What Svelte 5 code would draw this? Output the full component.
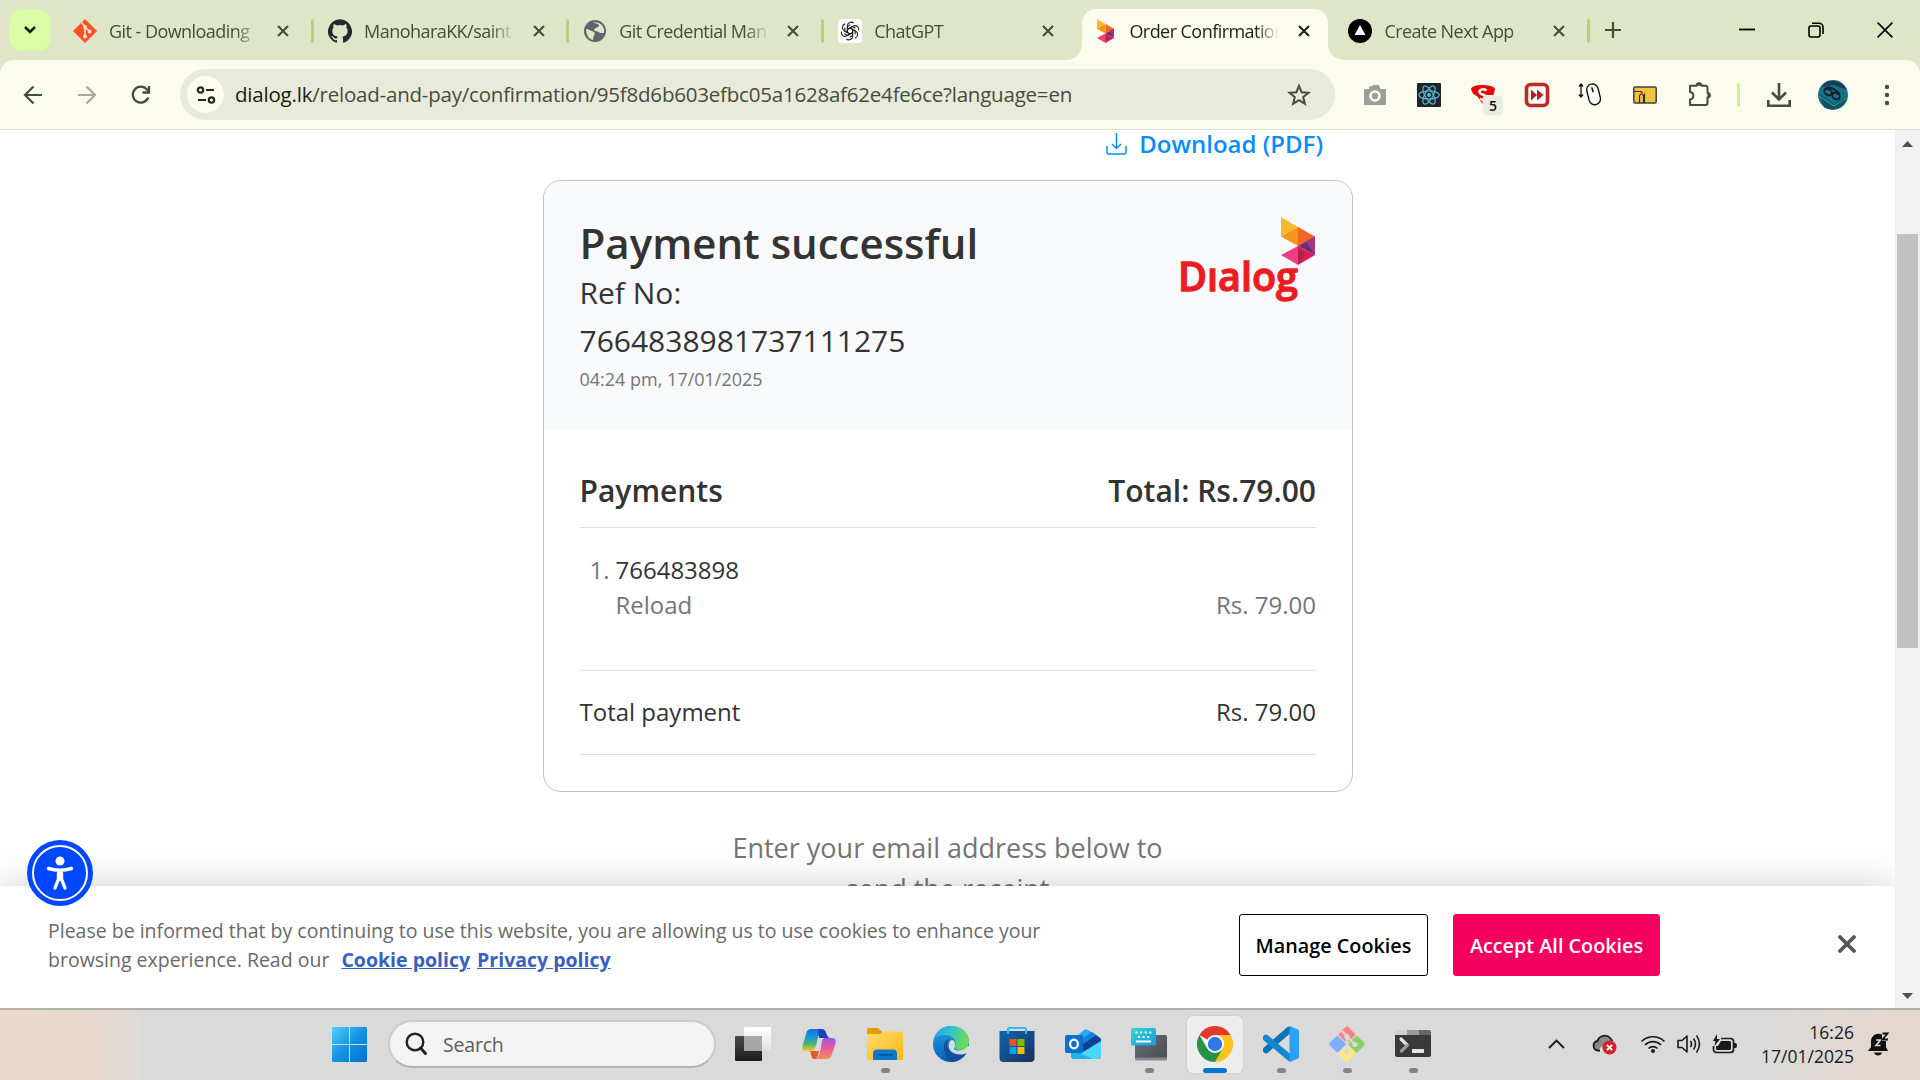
<script>
  const tabs = [
    { icon: 'git', title: 'Git - Downloading' },
    { icon: 'github', title: 'ManoharaKK/saint-' },
    { icon: 'globe', title: 'Git Credential Man' },
    { icon: 'gpt', title: 'ChatGPT' },
    { icon: 'dialog', title: 'Order Confirmation', active: true },
    { icon: 'next', title: 'Create Next App' }
  ];
  const extensions = ['camera', 'react', 'shield', 'forward', 'mouse', 'folder', 'puzzle'];
  const apps = [
    { icon: 'taskview' },
    { icon: 'copilot' },
    { icon: 'explorer', running: true },
    { icon: 'edge' },
    { icon: 'store' },
    { icon: 'outlook' },
    { icon: 'keyboard', running: true },
    { icon: 'chrome', running: true, active: true },
    { icon: 'vscode', running: true },
    { icon: 'gitbash', running: true },
    { icon: 'terminal', running: true }
  ];
  const petals = [0, 60, 120, 180, 240, 300];
</script>

{#snippet dialogMark()}
  <path d="M0 0L0 19.500L17 10Z" fill="#fdb92e" />
  <path d="M17 10L0 19.500L17 29Z" fill="#f7941e" />
  <path d="M17 10L34 19.500L17 29Z" fill="#f26522" />
  <path d="M34 19.500L17 29L34 38Z" fill="#6b2c7c" />
  <path d="M25 24.500L34 19.500V38Z" fill="#a5347f" />
  <path d="M17 29L34 38L17 48Z" fill="#db1f56" />
  <path d="M17 29L0 38L17 48Z" fill="#ee3d82" />
  <path d="M17 29L24 38L17 48Z" fill="#b52045" />
{/snippet}

{#snippet favicon(name)}
  <svg class="favicon" viewBox="0 0 24 24">
    {#if name === 'git'}
      <path d="M12 0.500L23.500 12L12 23.500L0.500 12Z" fill="#fb4f28" stroke="#fb4f28" stroke-linejoin="round" />
      <path d="M8.500 3.500L12 7.500V18M12 8L16.500 12.500" stroke="#e6e8d0" stroke-width="1.600" fill="none" />
      <circle cx="12" cy="8" r="1.900" fill="#e6e8d0" /><circle cx="12" cy="17.500" r="1.900" fill="#e6e8d0" /><circle cx="16.500" cy="12.500" r="1.900" fill="#e6e8d0" />
    {:else if name === 'github'}
      <path fill="#24292f" d="M12 .3a12 12 0 0 0-3.800 23.400c.6.1.8-.3.8-.6v-2c-3.300.7-4-1.600-4-1.600-.6-1.400-1.400-1.800-1.400-1.800-1-.7.1-.7.1-.7 1.200 0 1.900 1.200 1.900 1.200 1 1.800 2.800 1.300 3.500 1 0-.8.4-1.300.7-1.600-2.700-.3-5.500-1.300-5.500-6 0-1.200.5-2.300 1.300-3.100-.2-.4-.6-1.600 0-3.200 0 0 1-.3 3.400 1.200a11.500 11.500 0 0 1 6 0c2.300-1.500 3.300-1.200 3.300-1.200.6 1.600.2 2.800 0 3.200.9.8 1.300 1.900 1.300 3.200 0 4.600-2.800 5.600-5.500 5.900.5.4.9 1 .9 2.200v3.300c0 .3.1.7.8.6A12 12 0 0 0 12 .3" />
    {:else if name === 'globe'}
      <circle cx="12" cy="12" r="11" fill="#61646a" />
      <path d="M10 3c1 2 5 1 6 3c0 3-4 2-5 5c2 2 4 1 6 3l4 0a9.500 9.500 0 0 0-5-10zM3 10c3 0 5 2 8 3c2 2-1 4-1 8c-4-1-7-5-7-11z" fill="#dee6c7" />
    {:else if name === 'gpt'}
      <rect width="24" height="24" rx="4" fill="#fff" />
      <g fill="none" stroke="#222" stroke-width="1.100">
        {#each petals as a}
          <path transform="rotate({a} 12 12)" d="M9.400 13.500V6.800a3.700 3.700 0 0 1 6.300-2.600M9.400 10.500L14.500 7.500l3 1.700" />
        {/each}
      </g>
    {:else if name === 'dialog'}
      <g transform="translate(4 0) scale(.5)">{@render dialogMark()}</g>
    {:else}
      <circle cx="12" cy="12" r="12" fill="#000" /><path d="M12 6L17.500 16H6.500Z" fill="#fff" />
    {/if}
  </svg>
{/snippet}

{#snippet extension(name)}
  <svg class="ext" viewBox="0 0 24 24">
    {#if name === 'camera'}
      <path d="M2 6H6V3.500H9L10 2H16L17.500 6H22a1 1 0 0 1 1 1V21a1 1 0 0 1-1 1H2a1 1 0 0 1-1-1V7a1 1 0 0 1 1-1Z" fill="#9c9c9a" />
      <circle cx="12" cy="13" r="4.500" fill="#9c9c9a" stroke="#fff" stroke-width="2.600" />
    {:else if name === 'react'}
      <rect width="24" height="24" rx="1" fill="#202328" />
      <g fill="none" stroke="#55b9d9" stroke-width="1.200">
        <ellipse cx="12" cy="12" rx="10.200" ry="4" /><ellipse cx="12" cy="12" rx="10.200" ry="4" transform="rotate(60 12 12)" /><ellipse cx="12" cy="12" rx="10.200" ry="4" transform="rotate(120 12 12)" />
      </g>
      <circle cx="12" cy="12" r="2" fill="#55b9d9" />
    {:else if name === 'shield'}
      <path d="M0 6C1 3 5 2 11 2S23 3 24 6C23 12 20 20 13 22C10 20 8 15 6 13C3 12 1 10 0 6Z" fill="#ec0505" />
      <path d="M15.500 7.500C13 5.500 8.500 6 8.500 9C8.500 12 15 11 15 14.500C15 17 11 17.500 9 15.500" stroke="#fff" stroke-width="2.400" fill="none" />
      <rect x="12" y="12.500" width="20" height="20" rx="4" fill="#e9ecdf" stroke="#f5f6ea" />
    {:else if name === 'forward'}
      <rect x="1.500" y="1.500" width="21" height="21" rx="4" fill="#fff" stroke="#c22724" stroke-width="3.600" />
      <path d="M6 6.500L12 12L6 17.500ZM12 6.500L18.500 12L12 17.500Z" fill="#b02220" />
    {:else if name === 'mouse'}
      <path d="M2 1V14M0 3.500L2 1L4 3.500M0 11.500L2 14L4 11.500" stroke="#111" stroke-width="1.300" fill="none" />
      <rect x="9" y="1" width="11.500" height="21" rx="5.700" transform="rotate(-14 14 12)" fill="#fff" stroke="#111" stroke-width="1.400" />
      <path d="M13 5L14 8.500" stroke="#111" stroke-width="1.600" stroke-linecap="round" />
    {:else if name === 'folder'}
      <rect x=".8" y="4" width="22.400" height="16" rx="1.300" fill="#f6c43c" stroke="#3f4145" stroke-width="1.500" />
      <path d="M1 8.500H8L9.500 10M6.500 20V13Q8.500 8.500 10.500 13V20M10.500 13L11.500 11.500V20" stroke="#2d2d2d" stroke-width="1.200" fill="none" />
    {:else}
      <path d="M3 2.700H9.500a2.500 2.500 0 0 1 5 0H18.500a2 2 0 0 1 2 2V10a2.200 2.200 0 0 1 0 4.500V20a2 2 0 0 1-2 2H3V16.500C7.500 16 7.500 9.500 3 9Z" fill="none" stroke="#434f37" stroke-width="2" stroke-linejoin="round" />
      <path d="M9 2.700a3 3 0 0 1 6 0ZM20.500 9.500a3 3 0 0 1 0 6Z" fill="#434f37" />
    {/if}
  </svg>
{/snippet}

{#snippet appIcon(name)}
  <svg class="app-icon" viewBox="0 0 36 36">
    {#if name === 'taskview'}
      <rect y="10" width="27" height="25" rx="1" fill="url(#tvDark)" />
      <rect x="9" y="1" width="27" height="24" rx="1" fill="url(#tvLight)" />
      <path d="M9 10H27V25H9Z" fill="#909090" opacity=".75" />
    {:else if name === 'copilot'}
      <path d="M10 3H21.500C18 5 17 11 16 16C14 24 13 25 8 25H5C1 25 1 22 2 18L5 8C6 4.500 7 3 10 3Z" fill="url(#coA)" />
      <path d="M17 3H21C24.500 3 25 7 26 9C27 11.500 28 12 30 12H19C17 12 17.500 5 17 3Z" fill="#1b3fc0" />
      <path d="M23 12H31C35 12 35.500 15 34 19L31 28C30 32 28 33 25 33H14C18 32 19 26 20 21C21 15 21 13 23 12Z" fill="url(#coB)" />
      <path d="M9 25H18C16 33 15 33 13 33C10 33 10 26 9 25Z" fill="#f0562e" />
    {:else if name === 'explorer'}
      <path d="M0 3.500A1.500 1.500 0 0 1 1.500 2H11L15 5.500V10H0Z" fill="#e19e0b" />
      <path d="M0 8H13L16 5.500H34.500A1.500 1.500 0 0 1 36 7V34H0Z" fill="url(#folderG)" />
      <path d="M6 34V27.500A4 4 0 0 1 10 23.500H26A4 4 0 0 1 30 27.500V34Z" fill="#0f78ca" />
      <path d="M11 28.800H25" stroke="#07539b" stroke-width="1.800" stroke-linecap="round" />
    {:else if name === 'edge'}
      <circle cx="18" cy="18" r="18" fill="url(#edgeB)" />
      <path d="M1 13C3 5 10 0 18 0C29 0 36 7 36 15C36 20 33 24 27 24C23 24 21 22.500 21 21.500C21 20.500 22.500 19.500 22.500 17C22.500 12.500 18 9 12 9C7 9 3 11 1 13Z" fill="url(#edgeG)" />
      <path d="M11 20C11 16 13 13.500 17 13C13 16 13.500 22 17 25.500C21 29.500 28 29 33.500 26.500C31 32 25 36 18.500 36C13 34 11 27 11 20Z" fill="#124f9c" />
      <path d="M22 18C22 22 20 22 21.500 23.500C24 25.500 31 25 35 20L40 22L33 27.500C27 30 20 28 17 24C14.500 20 16 15 18.500 14C21 14 22 16 22 18Z" fill="#dadada" />
    {:else if name === 'store'}
      <path d="M.500 5H35.500V32A4 4 0 0 1 31.500 36H4.500A4 4 0 0 1 .5 32Z" fill="url(#storeG)" />
      <path d="M9 8V3.500A1.500 1.500 0 0 1 10.500 2H25.500A1.500 1.500 0 0 1 27 3.500V8" fill="none" stroke="#2cbdee" stroke-width="2" />
      <path d="M10.500 13H17.500V20H10.500Z" fill="#f25022" /><path d="M18.500 13H25.500V20H18.500Z" fill="#7fba00" />
      <path d="M10.500 21H17.500V28H10.500Z" fill="#00a4ef" /><path d="M18.500 21H25.500V28H18.500Z" fill="#ffb900" />
    {:else if name === 'outlook'}
      <path d="M6 15L19 4Q21 2.500 23 4L34 11Q36 12.500 36 15V30Q36 33 33 33H10Q6 33 6 30Z" fill="#27a9ec" />
      <path d="M17 17L31 9L36 13V16L18 27Z" fill="#0f3f94" />
      <path d="M15 14L27 6L31 9L17 19Z" fill="#1580dc" />
      <path d="M18 26L36 15V30Q36 33 33 33H14Z" fill="#49d6fb" />
      <path d="M6 24L28 33H10Q6 33 6 30Z" fill="#1fb3ec" />
      <rect y="9" width="18" height="18" rx="2" fill="#106fc9" />
      <ellipse cx="9" cy="18" rx="3.900" ry="4.300" fill="none" stroke="#fff" stroke-width="2.200" />
    {:else if name === 'keyboard'}
      <rect x="4" y="9" width="32" height="25" rx="1.500" fill="url(#kbG)" /><path d="M4 31.500H36V33a1.500 1.500 0 0 1-1.500 1.500H5.500A1.500 1.500 0 0 1 4 33Z" fill="#868b93" />
      <rect y="2" width="25" height="17.500" rx="1.500" fill="url(#kbB)" />
      <path d="M4.500 6.500H21M7 11H19" stroke="#fff" stroke-width="2" stroke-dasharray="2 2.600" /><path d="M5 15.500H20" stroke="#fff" stroke-width="2" />
    {:else if name === 'chrome'}
      <path d="M18 18L2.400 9A18 18 0 0 1 33.600 9Z" fill="#e23b2e" />
      <path d="M18 18L33.600 9A18 18 0 0 1 18 36L10.200 22.500Z" fill="#fcc31e" />
      <path d="M2.400 9A18 18 0 0 0 18 36L25.800 22.500L18 26L10.200 22.500Z" fill="#269444" />
      <path d="M18 9H33.600L26 22.500Z" fill="#fcc31e" />
      <circle cx="18" cy="18" r="9" fill="#fff" /><circle cx="18" cy="18" r="7.200" fill="#2f77ea" />
    {:else if name === 'vscode'}
      <path d="M3 24L26 4" stroke="#0b74b9" stroke-width="6.500" stroke-linecap="round" />
      <path d="M3 12L27 32" stroke="#1487d2" stroke-width="6.500" stroke-linecap="round" />
      <path d="M26.500 0L35 3.500Q36 4 36 5V31Q36 32 35 32.500L26.500 36Z" fill="#27a3f2" />
    {:else if name === 'gitbash'}
      <g transform="rotate(45 18 18)">
        <rect x="5" y="5" width="12.500" height="12.500" rx="1.500" fill="#ff8080" />
        <rect x="18.700" y="5" width="12.500" height="12.500" rx="1.500" fill="#88d15c" />
        <rect x="5" y="18.700" width="12.500" height="12.500" rx="1.500" fill="#7fb0ff" />
        <rect x="18.700" y="18.700" width="12.500" height="12.500" rx="1.500" fill="#ffe680" />
      </g>
      <path d="M13 5L18 10.500V26M18 11L26 18.500" stroke="#dadada" stroke-width="2.200" fill="none" />
      <circle cx="18" cy="10.500" r="2.600" fill="#dadada" /><circle cx="18" cy="26" r="2.600" fill="#dadada" /><circle cx="26" cy="18.500" r="2.600" fill="#dadada" />
    {:else}
      <path d="M0 6A2 2 0 0 1 2 4H12V10H0Z" fill="#cfcfcf" /><path d="M12 4H24V10H12Z" fill="#9a9a9a" /><path d="M24 4H34A2 2 0 0 1 36 6V10H24Z" fill="#666" />
      <path d="M0 9H36V29A2 2 0 0 1 34 31H2A2 2 0 0 1 0 29Z" fill="#3a3a3a" />
      <path d="M6 13L12 19" stroke="#e4e4e4" stroke-width="3.200" stroke-linecap="round" /><path d="M12 19.500L6.500 25" stroke="#9c9c9c" stroke-width="3.200" stroke-linecap="round" />
      <rect x="17" y="23" width="12" height="4" rx=".5" fill="#e4e4e4" />
    {/if}
  </svg>
{/snippet}

<svg class="defs" width="0" height="0">
  <defs>
    <linearGradient id="tvDark" x2="0" y2="1"><stop stop-color="#4a4a4a" /><stop offset="1" stop-color="#1c1c1c" /></linearGradient>
    <linearGradient id="tvLight" x2="0" y2="1"><stop stop-color="#fff" /><stop offset="1" stop-color="#e2e2e2" /></linearGradient>
    <linearGradient id="coA" x2="0" y2="1"><stop stop-color="#1a70dd" /><stop offset=".35" stop-color="#1694d8" /><stop offset=".7" stop-color="#52b870" /><stop offset="1" stop-color="#f5cd1c" /></linearGradient>
    <linearGradient id="coB" x2="0" y2="1"><stop stop-color="#9a55e6" /><stop offset=".5" stop-color="#e85b9d" /><stop offset="1" stop-color="#ff8b50" /></linearGradient>
    <linearGradient id="folderG" x2="1" y2="1"><stop stop-color="#ffdb6b" /><stop offset="1" stop-color="#fbb815" /></linearGradient>
    <linearGradient id="edgeB" x2="0" y2="1"><stop stop-color="#1fa3e0" /><stop offset="1" stop-color="#0b5cb8" /></linearGradient>
    <linearGradient id="edgeG" x2="1" y2=".3"><stop stop-color="#239fdc" /><stop offset=".5" stop-color="#35c1d0" /><stop offset="1" stop-color="#66dd55" /></linearGradient>
    <linearGradient id="storeG" x2="1" y2="1"><stop stop-color="#0b66b5" /><stop offset="1" stop-color="#1f2f58" /></linearGradient>
    <linearGradient id="kbG" x2="1" y2="1"><stop stop-color="#6b7077" /><stop offset="1" stop-color="#474b51" /></linearGradient>
    <linearGradient id="kbB" x2="1" y2="1"><stop stop-color="#2fd9cd" /><stop offset="1" stop-color="#1b95dd" /></linearGradient>
    <linearGradient id="winG" x2="1" y2="1"><stop stop-color="#4fd0fb" /><stop offset=".5" stop-color="#1592e2" /><stop offset="1" stop-color="#0272ce" /></linearGradient>
  </defs>
</svg>

<div class="screen">
  <div class="chrome">
    <header class="tabstrip">
      <button class="tab-search" aria-label="Search tabs"><svg width="14" height="10" viewBox="0 0 14 10"><path d="M2 2L7 7L12 2" fill="none" stroke="#1a2010" stroke-width="2.600" /></svg></button>
      <div class="tabs">
        {#each tabs as tab, i}
          <div class="tab" class:active={tab.active}>
            {@render favicon(tab.icon)}
            <span class="tab-title">{tab.title}</span>
            <svg class="tab-close" viewBox="0 0 12 12"><path d="M1 1L11 11M11 1L1 11" stroke="currentColor" stroke-width="2.100" /></svg>
            <i class="sep" class:hidden={i === 3 || i === 4}></i>
          </div>
        {/each}
      </div>
      <svg class="plus" viewBox="0 0 16 16"><path d="M8 0V16M0 8H16" stroke="#434f37" stroke-width="2.200" /></svg>
      <div class="window-controls">
        <svg width="16" height="16" viewBox="0 0 16 16"><path d="M0 7.500H16" stroke="#000" stroke-width="1.800" /></svg>
        <svg width="16" height="16" viewBox="0 0 16 16" fill="none" stroke="#000" stroke-width="1.600"><rect x="1" y="4" width="11" height="11" rx="2" /><path d="M4 1.200H11A4 4 0 0 1 15 5V12" /></svg>
        <svg width="16" height="16" viewBox="0 0 16 16"><path d="M.6.6L15.400 15.400M15.400.6L.6 15.400" stroke="#000" stroke-width="1.600" /></svg>
      </div>
    </header>

    <nav class="toolbar">
      <div class="nav-icons">
        <svg width="20" height="20" viewBox="0 0 20 20"><path d="M10.500 1.500L2 10L10.500 18.500M2 10H19" fill="none" stroke="#434f37" stroke-width="2.200" /></svg>
        <svg width="20" height="20" viewBox="0 0 20 20"><path d="M9.500 1.500L18 10L9.500 18.500M18 10H1" fill="none" stroke="#a7aa9b" stroke-width="2.200" /></svg>
        <svg width="20" height="20" viewBox="0 0 20 20"><path d="M17.300 12.500A8 8 0 1 1 16 4.500L18 6.500M18 1V7.500H11.500" fill="none" stroke="#434f37" stroke-width="2.300" /></svg>
      </div>
      <div class="omnibox">
        <span class="site-info"><svg width="20" height="20" viewBox="0 0 20 20" fill="none" stroke="#23291b" stroke-width="2.200"><circle cx="4.500" cy="5" r="2.700" /><path d="M10 5H18M2 15H10" /><circle cx="15.500" cy="15" r="2.700" /></svg></span>
        <span class="url"><b>dialog.lk</b>/reload-and-pay/confirmation/95f8d6b603efbc05a1628af62e4fe6ce?language=en</span>
        <svg class="star" width="24" height="24" viewBox="0 0 24 24"><path d="M12 2.800L14.600 9.200L21.500 9.700L16.200 14.100L17.900 20.900L12 17.200L6.100 20.900L7.800 14.100L2.500 9.700L9.400 9.200Z" fill="none" stroke="#434f37" stroke-width="2" /></svg>
      </div>
      <div class="extensions">
        {#each extensions as name}
          <span class="ext-slot">{@render extension(name)}{#if name === 'shield'}<em>5</em>{/if}</span>
        {/each}
      </div>
      <i class="bar-sep"></i>
      <svg class="download" width="24" height="24" viewBox="0 0 24 24"><path d="M12 0V16M5 9.500L12 16.500L19 9.500M1.300 17V22.700H22.700V17" fill="none" stroke="#434f37" stroke-width="2.600" /></svg>
      <svg class="avatar" width="30" height="30" viewBox="0 0 30 30">
        <circle cx="15" cy="15" r="15" fill="#14748a" /><path d="M3 7A15 15 0 0 1 29 10L16 5Z" fill="#1e3c50" /><path d="M1 14L16 24L29 16A15 15 0 0 1 6 27Z" fill="#0d5260" /><path d="M1 16L16 26L30 17" stroke="#35a9b4" fill="none" />
        <g fill="none" stroke="#1c1a2e" stroke-width="1.800"><ellipse cx="10" cy="12" rx="4" ry="3" transform="rotate(30 10 12)" /><ellipse cx="18" cy="16" rx="4" ry="3" transform="rotate(30 18 16)" /><path d="M7 9C11 5 16 9 22 14" /></g>
      </svg>
      <svg class="dots" width="6" height="22" viewBox="0 0 6 22" fill="#434f37"><circle cx="3" cy="3" r="2.200" /><circle cx="3" cy="11" r="2.200" /><circle cx="3" cy="19" r="2.200" /></svg>
    </nav>
  </div>

  <div class="viewport">
    <main class="page">
      <a class="pdf" href="#pdf">
        <svg width="21" height="22" viewBox="0 0 21 22"><path d="M10.500 0V15M6 11L10.500 15.500L15 11M1 13V19.500Q1 21 2.500 21H18.500Q20 21 20 19.500V13" fill="none" stroke="#0a8cff" stroke-width="1.500" /></svg>
        <span>Download (PDF)</span>
      </a>
      <section class="card">
        <div class="card-head">
          <div>
            <h1>Payment successful</h1>
            <p class="ref">Ref No:<br />7664838981737111275</p>
            <p class="date">04:24 pm, 17/01/2025</p>
          </div>
          <svg class="logo" width="138" height="86" viewBox="0 0 138 86">
            <g transform="translate(103 0)">{@render dialogMark()}</g>
            <text x="0" y="74" textLength="120" lengthAdjust="spacingAndGlyphs">Dıalog</text>
          </svg>
        </div>
        <div class="card-body">
          <div class="row heading"><span>Payments</span><span>Total: Rs.79.00</span></div>
          <div class="item">
            <span class="num">1.</span>
            <div class="item-main">
              <div class="dark">766483898</div>
              <div class="row"><span>Reload</span><span>Rs. 79.00</span></div>
            </div>
          </div>
          <div class="row total"><span>Total payment</span><span>Rs. 79.00</span></div>
        </div>
      </section>
      <p class="email">Enter your email address below to<br />send the receipt</p>
    </main>
    <aside class="scrollbar">
      <svg width="11" height="6" viewBox="0 0 11 6"><path d="M0 6L5.500 0L11 6Z" fill="#505050" /></svg>
      <i class="thumb"></i>
      <svg width="11" height="6" viewBox="0 0 11 6"><path d="M0 0L5.500 6L11 0Z" fill="#505050" /></svg>
    </aside>
    <div class="cookie-clip">
      <div class="cookies">
        <p>Please be informed that by continuing to use this website, you are allowing us to use cookies to enhance your<br />browsing experience. Read our <a class="first" href="#cookie">Cookie policy</a><a href="#privacy">Privacy policy</a></p>
        <button class="manage">Manage Cookies</button>
        <button class="accept">Accept All Cookies</button>
        <svg class="dismiss" width="18" height="18" viewBox="0 0 18 18"><path d="M2 2L16 16M16 2L2 16" stroke="#565656" stroke-width="3.800" stroke-linecap="round" /></svg>
      </div>
    </div>
    <svg class="a11y" width="66" height="66" viewBox="0 0 66 66">
      <circle cx="33" cy="33" r="33" fill="#0048ff" /><circle cx="33" cy="33" r="27" fill="none" stroke="#fff" stroke-width="2" />
      <circle cx="33" cy="21" r="4.500" fill="#fff" />
      <path d="M21.500 28.500Q33 32 44.500 28.500M33 31V39M31.500 33V39L28 48M34.500 33V39L38 48" fill="none" stroke="#fff" stroke-width="3.400" stroke-linecap="round" />
    </svg>
  </div>

  <footer class="taskbar">
    <svg class="start" width="35" height="35" viewBox="0 0 35 35"><path d="M1 0H17V17H0V1ZM18 0H34L35 1V17H18ZM0 18H17V35H1L0 34ZM18 18H35V34L34 35H18Z" fill="url(#winG)" /></svg>
    <div class="search">
      <svg width="22" height="24" viewBox="0 0 22 24"><circle cx="10" cy="10" r="8.300" fill="none" stroke="#222" stroke-width="2.400" /><path d="M15.500 16L20.500 21.500" stroke="#222" stroke-width="3" stroke-linecap="round" /></svg>
      <span>Search</span>
    </div>
    <div class="apps">
      {#each apps as app}
        <div class="app" class:active={app.active} class:running={app.running}>{@render appIcon(app.icon)}<i></i></div>
      {/each}
    </div>
    <div class="tray">
      <svg class="chev" width="17" height="10" viewBox="0 0 17 10"><path d="M1 9L8.500 1.500L16 9" fill="none" stroke="#1b1b1b" stroke-width="1.900" /></svg>
      <svg class="cloud" width="26" height="22" viewBox="0 0 26 22"><path d="M6 17.500A5 5 0 0 1 5 8A7.500 7.500 0 0 1 18 5.500A5.500 5.500 0 0 1 20.500 9L9 14Z" fill="#8a8a8a" /><path d="M8 17.500H6A4.800 4.800 0 0 1 5.500 8A7.500 7.500 0 0 1 18.500 5.500L20.500 8" fill="none" stroke="#1b1b1b" stroke-width="1.800" /><circle cx="17.500" cy="14.500" r="7" fill="#d4202c" /><path d="M14.800 11.800L20.200 17.200M20.200 11.800L14.800 17.200" stroke="#fff" stroke-width="1.900" /></svg>
      <svg class="wifi" width="26" height="20" viewBox="0 0 26 20"><g fill="none" stroke="#1b1b1b" stroke-width="1.700"><path d="M1.500 7.500A16.300 16.300 0 0 1 24.500 7.500M5 11A11.300 11.300 0 0 1 21 11M8.500 14.500A6.400 6.400 0 0 1 17.500 14.500" /></g><circle cx="13" cy="17" r="2" fill="#1b1b1b" /></svg>
      <svg class="sound" width="26" height="20" viewBox="0 0 26 20"><g fill="none" stroke="#1b1b1b" stroke-width="1.600"><path d="M2 6.500H6L11 2V18L6 13.500H2Z" stroke-linejoin="round" /><path d="M14.500 7Q16.500 10 14.500 13M17.500 4.500Q21.500 10 17.500 15.500M20.500 1.500Q26.500 10 20.500 18.500" /></g></svg>
      <svg class="battery" width="25" height="20" viewBox="0 0 25 20"><path d="M9 4.500H18.500A3 3 0 0 1 21.500 7.500V15.500A3 3 0 0 1 18.500 18.500H4.500A3 3 0 0 1 1.500 15.500V12" fill="none" stroke="#1b1b1b" stroke-width="1.700" /><path d="M9 7H17.500A1.500 1.500 0 0 1 19 8.500V14.500A1.500 1.500 0 0 1 17.500 16H5.500A1.500 1.500 0 0 1 4 14.500V12H6ZM22 9H23.500Q25 9 25 11.500T23.500 14H22ZM5 0L1 7H3.500L2.500 12L8 5H5Z" fill="#1b1b1b" /></svg>
      <div class="clock"><span>16:26</span><span>17/01/2025</span></div>
      <svg class="bell" width="22" height="24" viewBox="0 0 22 24"><path d="M3 9A7.500 7.500 0 0 1 14 2.500V9H18V15L20 19H0L3 15ZM6 20.500H14Q13 23.500 10 23.500T6 20.500Z" fill="#111" /><path d="M8 8H12.500L8 13.500H12.500" fill="none" stroke="#dadada" stroke-width="1.600" /><path d="M14.500 1.500H19.500L14.500 7.500H20" fill="none" stroke="#111" stroke-width="1.800" /></svg>
    </div>
  </footer>
</div>

<style>
  :global(body) { margin: 0; overflow: hidden; }
  .defs { position: absolute; }
  .screen { width: 1920px; height: 1080px; display: flex; flex-direction: column; background: #fff; font-family: "Open Sans", "Noto Sans", sans-serif; white-space: nowrap; overflow: hidden; }
  svg { flex: none; display: block; }
  p, h1 { margin: 0; }
  button { font-family: inherit; padding: 0; box-sizing: border-box; }

  .chrome { flex: none; background: #dee6c7; }
  .tabstrip { height: 60px; display: flex; align-items: center; box-sizing: border-box; padding-left: 9px; }
  .tab-search { width: 42px; height: 42px; border: 0; border-radius: 14px; background: #d9fca5; display: grid; place-items: center; }
  .tabs { display: flex; margin-left: 6px; align-self: stretch; padding-top: 9px; }
  .tab { position: relative; width: 255.1px; height: 51px; display: flex; align-items: center; padding: 0 23px 8px 16px; box-sizing: border-box; color: #434f37; }
  .tab.active { color: #1b2113; }
  .tab.active::before { content: ""; position: absolute; left: 5px; right: 4px; top: 0; bottom: 0; background: #fbfbee; border-radius: 14px 14px 0 0; }
  .tab.active::after { content: ""; position: absolute; left: -10px; right: -11px; bottom: 0; height: 15px; background: radial-gradient(circle at 0 0, transparent 14.500px, #fbfbee 15px) left / 15px 15px no-repeat, radial-gradient(circle at 100% 0, transparent 14.500px, #fbfbee 15px) right / 15px 15px no-repeat; }
  .tab > * { z-index: 1; }
  .favicon { width: 24px; height: 24px; }
  .tab-title { width: 152px; margin: 1px 0 0 12px; font-size: 18px; line-height: 26px; letter-spacing: -.55px; -webkit-mask-image: linear-gradient(90deg, #000 126px, transparent 150px); mask-image: linear-gradient(90deg, #000 126px, transparent 150px); }
  .tab-close { width: 12px; height: 12px; margin-left: 17px; }
  .sep { position: absolute; right: -2px; top: 10px; width: 3px; height: 24px; border-radius: 2px; background: #b3d27f; }
  .sep.hidden { display: none; }
  .plus { width: 16px; height: 16px; margin-left: 17px; }
  .window-controls { display: flex; gap: 53px; margin: 0 27px 0 auto; }

  .toolbar { height: 70px; box-sizing: border-box; border-bottom: 1px solid #dcdfd2; background: #fbfbee; border-radius: 14px 14px 0 0; display: flex; align-items: center; }
  .nav-icons { display: flex; gap: 34px; padding-left: 23px; box-sizing: border-box; width: 180px; }
  .omnibox { width: 1155px; height: 51px; border-radius: 26px; background: #e8ebda; display: flex; align-items: center; box-sizing: border-box; padding: 0 24px 0 7px; }
  .site-info { width: 37px; height: 37px; border-radius: 50%; background: #fbfbee; display: grid; place-items: center; }
  .url { font-size: 20.500px; margin: -2px 0 0 11px; color: #474b40; letter-spacing: -.21px; }
  .url b { font-weight: 400; color: #1b1c14; }
  .star { margin-left: auto; }
  .extensions { display: flex; gap: 30px; margin-left: 28px; }
  .ext-slot { position: relative; width: 24px; height: 24px; }
  .ext { width: 24px; height: 24px; overflow: visible; }
  .ext-slot em { position: absolute; left: 18px; top: 13px; font: 600 14px/20px "Open Sans", sans-serif; color: #10131f; }
  .bar-sep { width: 3px; height: 24px; background: #cdf08f; border-radius: 2px; margin-left: 26px; }
  .download { margin-left: 27px; }
  .avatar { margin-left: 27px; }
  .dots { margin-left: 36px; }

  .viewport { position: relative; height: 878px; flex: none; display: flex; overflow: hidden; }
  .page { width: 1895px; display: flex; flex-direction: column; align-items: center; color: #333; }
  .pdf { align-self: flex-end; margin-right: 572px; height: 50px; flex: none; display: flex; gap: 12px; color: #0a8cff; font-size: 24px; font-weight: 600; line-height: 30px; text-decoration: none; }
  .pdf svg { margin-top: 3px; }
  .pdf span { margin-top: -1px; }
  .card { width: 810px; height: 612px; flex: none; box-sizing: border-box; border: 1px solid #bfc0c1; border-radius: 18px; overflow: hidden; margin-left: 1px; }
  .card-head { height: 250px; box-sizing: border-box; background: #f8f9fb; display: flex; justify-content: space-between; padding: 36px 36px 0 35.500px; }
  h1 { font-size: 42px; line-height: 52px; font-weight: 600; }
  .ref { font-size: 30px; line-height: 48px; }
  .date { font-size: 18px; line-height: 29px; color: #757575; }
  .logo { overflow: visible; }
  .logo text { font: 600 40px "Open Sans", sans-serif; fill: #ed1c24; stroke: #ed1c24; stroke-width: 1.300px; }
  .card-body { padding: 37px 36px 0 35.500px; font-size: 24px; line-height: 35px; }
  .row { display: flex; justify-content: space-between; }
  .heading { font-size: 30px; font-weight: 600; line-height: 45px; height: 60px; box-sizing: border-box; border-bottom: 1px solid #e0e0e0; }
  .item { height: 143px; display: flex; box-sizing: border-box; padding-top: 24px; border-bottom: 1px solid #e0e0e0; color: #757575; }
  .num { width: 36px; box-sizing: border-box; padding-left: 10px; }
  .item-main { flex: 1; }
  .dark { color: #333; }
  .total { height: 84px; box-sizing: border-box; padding-top: 23px; border-bottom: 1px solid #e0e0e0; }
  .email { margin-top: 36px; font-size: 27px; line-height: 40.500px; color: #757575; text-align: center; }

  .scrollbar { width: 25px; background: #f1f1f1; display: flex; flex-direction: column; align-items: center; box-sizing: border-box; padding: 11px 0 9px; z-index: 2; }
  .thumb { width: 21px; height: 414px; background: #c1c1c1; margin: 87px 0 auto; }
  .cookie-clip { position: absolute; left: 0; bottom: 0; width: 1895px; height: 200px; overflow: hidden; display: flex; align-items: flex-end; }
  .cookies { width: 1895px; height: 122px; background: #fff; box-shadow: 0 0 36px rgba(0, 0, 0, .2); display: flex; align-items: flex-start; box-sizing: border-box; padding: 28px 39px 0 48px; }
  .cookies p { width: 1191px; padding-top: 2px; font-size: 19.500px; line-height: 29px; color: #696969; }
  .cookies a { color: #3860be; font-weight: 700; margin-left: 7px; }
  .cookies button { height: 62px; border-radius: 3px; font-size: 19.800px; font-weight: 600; }
  .manage { width: 189px; background: #fff; border: 1px solid #000; color: #000; }
  .accept { width: 207px; margin-left: 25px; background: #f4005f; border: 1px solid #f4005f; color: #fff; }
  .dismiss { margin: 21px 0 0 auto; }
  .a11y { position: absolute; left: 27px; top: 710px; }

  .taskbar { height: 72px; flex: none; box-sizing: border-box; border-top: 2px solid #b0b1ae; background: linear-gradient(90deg, #ead8cc 0, #e8d8cc 90px, #dadada 150px, #dadada 1770px, #e6d7cd 1900px); display: flex; align-items: center; padding-left: 332px; }
  .start { margin-top: -1px; }
  .search { width: 328px; height: 48px; margin: -2px 0 0 21px; box-sizing: border-box; border: 2px solid #cbcbcb; border-bottom-color: #b5b5b5; border-radius: 24px; background: #f3f3f3; display: flex; align-items: center; padding-left: 15px; font-size: 19.500px; color: #5c5c5c; }
  .search span { margin-left: 16px; letter-spacing: -.2px; }
  .apps { display: flex; gap: 10px; margin-left: 9px; }
  .app { width: 56px; height: 57px; margin-top: -1px; border-radius: 6px; display: flex; flex-direction: column; align-items: center; box-sizing: border-box; padding-top: 10px; }
  .app i { width: 9px; height: 5px; border-radius: 3px; margin-top: 6px; background: transparent; }
  .app.running i { background: #858585; }
  .app.active { background: #ededed; box-shadow: 0 0 0 1px #d0d0d0; }
  .app.active i { width: 24px; background: #0078d4; }
  .app-icon { width: 36px; height: 36px; }
  .tray { display: flex; align-items: center; margin-left: auto; padding-right: 30px; margin-top: -2px; }
  .cloud { margin-left: 27px; }
  .wifi { margin-left: 22px; }
  .sound { margin-left: 10px; }
  .battery { margin-left: 10px; }
  .clock { width: 117px; display: flex; flex-direction: column; align-items: flex-end; font-size: 17.500px; line-height: 24px; color: #1b1b1b; letter-spacing: .02px; }
  .bell { margin-left: 14px; }
</style>
